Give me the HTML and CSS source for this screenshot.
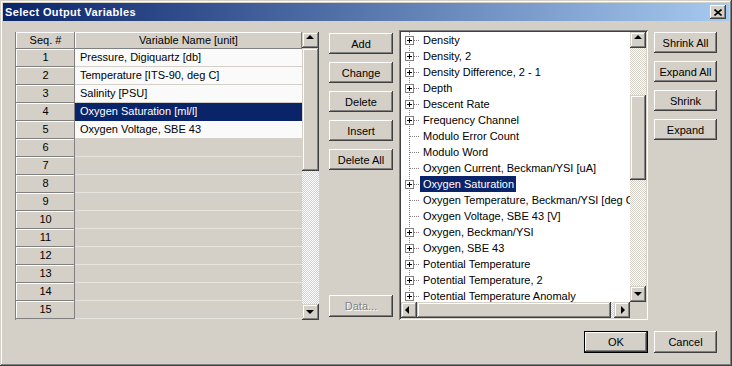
FILE: index.html
```html
<!DOCTYPE html>
<html lang="en">
<head>
	<meta charset="UTF-8">
	<title>Select Output Variables</title>
	<link rel="stylesheet" href="styles.css">
</head>
<body>
	<div class="window">
		<div class="titlebar">
			<span class="title">Select Output Variables</span>
			<button class="close" type="button">
				<svg width="8" height="7" viewBox="0 0 8 7"><path d="M0.5 0.5 L7.5 6.5 M7.5 0.5 L0.5 6.5" stroke="#000" stroke-width="1.6" fill="none"/></svg>
			</button>
		</div>
		<div class="content">
			<div class="main">
				<div class="grid">
					<div class="table">
						<div class="row head"><div class="seq">Seq. #</div><div class="name">Variable Name [unit]</div></div>
						<div class="row"><div class="seq">1</div><div class="name">Pressure, Digiquartz [db]</div></div>
						<div class="row"><div class="seq">2</div><div class="name">Temperature [ITS-90, deg C]</div></div>
						<div class="row"><div class="seq">3</div><div class="name">Salinity [PSU]</div></div>
						<div class="row sel"><div class="seq">4</div><div class="name">Oxygen Saturation [ml/l]</div></div>
						<div class="row"><div class="seq">5</div><div class="name">Oxygen Voltage, SBE 43</div></div>
						<div class="row empty"><div class="seq">6</div><div class="name"></div></div>
						<div class="row empty"><div class="seq">7</div><div class="name"></div></div>
						<div class="row empty"><div class="seq">8</div><div class="name"></div></div>
						<div class="row empty"><div class="seq">9</div><div class="name"></div></div>
						<div class="row empty"><div class="seq">10</div><div class="name"></div></div>
						<div class="row empty"><div class="seq">11</div><div class="name"></div></div>
						<div class="row empty"><div class="seq">12</div><div class="name"></div></div>
						<div class="row empty"><div class="seq">13</div><div class="name"></div></div>
						<div class="row empty"><div class="seq">14</div><div class="name"></div></div>
						<div class="row empty"><div class="seq">15</div><div class="name"></div></div>
					</div>
					<div class="vscroll grid-scroll">
						<span class="arrow up"></span>
						<span class="thumb"></span>
						<span class="track"></span>
						<span class="arrow down"></span>
					</div>
				</div>
				<div class="midcol">
					<button class="btn" type="button">Add</button>
					<button class="btn" type="button">Change</button>
					<button class="btn" type="button">Delete</button>
					<button class="btn" type="button">Insert</button>
					<button class="btn" type="button">Delete All</button>
					<button class="btn data" type="button" disabled>Data...</button>
				</div>
				<div class="tree">
					<ul class="tree-list">
						<li><span class="twig"><i class="plus"></i></span><span class="label">Density</span></li>
						<li><span class="twig"><i class="plus"></i></span><span class="label">Density, 2</span></li>
						<li><span class="twig"><i class="plus"></i></span><span class="label">Density Difference, 2 - 1</span></li>
						<li><span class="twig"><i class="plus"></i></span><span class="label">Depth</span></li>
						<li><span class="twig"><i class="plus"></i></span><span class="label">Descent Rate</span></li>
						<li><span class="twig"><i class="plus"></i></span><span class="label">Frequency Channel</span></li>
						<li><span class="twig"></span><span class="label">Modulo Error Count</span></li>
						<li><span class="twig"></span><span class="label">Modulo Word</span></li>
						<li><span class="twig"></span><span class="label">Oxygen Current, Beckman/YSI [uA]</span></li>
						<li class="sel"><span class="twig"><i class="plus"></i></span><span class="label">Oxygen Saturation</span></li>
						<li><span class="twig"></span><span class="label">Oxygen Temperature, Beckman/YSI [deg C]</span></li>
						<li><span class="twig"></span><span class="label">Oxygen Voltage, SBE 43 [V]</span></li>
						<li><span class="twig"><i class="plus"></i></span><span class="label">Oxygen, Beckman/YSI</span></li>
						<li><span class="twig"><i class="plus"></i></span><span class="label">Oxygen, SBE 43</span></li>
						<li><span class="twig"><i class="plus"></i></span><span class="label">Potential Temperature</span></li>
						<li><span class="twig"><i class="plus"></i></span><span class="label">Potential Temperature, 2</span></li>
						<li><span class="twig"><i class="plus"></i></span><span class="label">Potential Temperature Anomaly</span></li>
					</ul>
					<div class="vscroll tree-v">
						<span class="arrow up"></span>
						<span class="track top"></span>
						<span class="thumb"></span>
						<span class="track"></span>
						<span class="arrow down"></span>
					</div>
					<div class="hscroll">
						<span class="arrow left"></span>
						<span class="thumb"></span>
						<span class="track"></span>
						<span class="arrow right"></span>
					</div>
					<div class="corner"></div>
				</div>
				<div class="rightcol">
					<button class="btn" type="button">Shrink All</button>
					<button class="btn" type="button">Expand All</button>
					<button class="btn" type="button">Shrink</button>
					<button class="btn" type="button">Expand</button>
				</div>
			</div>
			<div class="footer">
				<button class="btn ok" type="button">OK</button>
				<button class="btn cancel" type="button">Cancel</button>
			</div>
		</div>
	</div>
</body>
</html>
```

FILE: styles.css
```css
*{ box-sizing: border-box; }
body{
	margin: 0;
	font: 11px "Liberation Sans", Arial, sans-serif;
	color: #000;
	background: #d4d0c8;
}
ul{ margin: 0; padding: 0; list-style: none; }

/* window frame */
.window{
	width: 732px; height: 366px;
	padding: 3px;
	background: #d4d0c8;
	box-shadow: inset -1px -1px #404040, inset 1px 1px #d4d0c8, inset -2px -2px #808080, inset 2px 2px #fff;
	display: flex; flex-direction: column;
}
.titlebar{
	height: 18px;
	padding: 0 3px 0 2px;
	background: linear-gradient(to right, #0a246a, #a6caf0);
	display: flex; align-items: center; justify-content: space-between;
}
.title{ color: #fff; font-weight: bold; font-size: 11px; letter-spacing: .35px; }
.close{
	width: 16px; height: 14px;
	padding: 0; border: 0;
	background: #d4d0c8;
	box-shadow: inset -1px -1px #404040, inset 1px 1px #fff, inset -2px -2px #808080;
	display: flex; align-items: center; justify-content: center;
}
.content{ padding: 11px 12px 0 12px; }
.main{ display: flex; align-items: flex-start; }

/* raised buttons */
.btn{
	height: 21px;
	padding: 0; border: 0;
	font: inherit; color: #000;
	background: #d4d0c8;
	box-shadow: inset -1px -1px #404040, inset 1px 1px #fff, inset -2px -2px #808080, inset 2px 2px #d4d0c8;
}
.btn:disabled{ color: #808080; text-shadow: 1px 1px #fff; }

/* grid */
.grid{ display: flex; height: 288px; }
.table{ width: 287px; border-left: 1px solid #808080; }
.row{ display: flex; height: 18px; line-height: 17px; }
.row.head{ height: 17px; line-height: 16px; }
.seq{
	width: 59px;
	text-align: center;
	background: #d4d0c8;
	box-shadow: inset -1px -1px #808080, inset 1px 1px #fff;
}
.name{
	flex: 1;
	padding-left: 5px;
	background: #fafafa;
	border-bottom: 1px solid #d4d0c8;
	white-space: nowrap; overflow: hidden;
}
.row.head .name{
	padding: 0; border: 0;
	text-align: center;
	background: #d4d0c8;
	box-shadow: inset -1px -1px #808080, inset 1px 1px #fff;
}
.row.sel .name{ background: #0a246a; color: #fff; border-bottom-color: #0a246a; }
.row.empty .name{ background: #d4d0c8; border-bottom-color: #e6e4df; }

/* scrollbars */
.vscroll{ width: 17px; display: flex; flex-direction: column; }
.hscroll{ height: 16px; display: flex; }
.arrow, .thumb{
	position: relative;
	flex: none;
	background: #d4d0c8;
	box-shadow: inset -1px -1px #404040, inset 1px 1px #d4d0c8, inset -2px -2px #808080, inset 2px 2px #fff;
}
.vscroll .arrow{ height: 16px; }
.hscroll .arrow{ width: 16px; }
.track{
	flex: 1;
	background: repeating-conic-gradient(#fff 0 25%, #d4d0c8 0 50%) 0 0 / 2px 2px;
}
.arrow::before{
	content: "";
	position: absolute;
	border: 4px solid transparent;
}
.arrow.up::before{ left: 4px; top: 3px; border-bottom-color: #000; border-top-width: 0; }
.arrow.down::before{ left: 4px; top: 6px; border-top-color: #000; border-bottom-width: 0; }
.arrow.left::before{ left: 4px; top: 4px; border-right-color: #000; border-left-width: 0; }
.arrow.right::before{ left: 7px; top: 4px; border-left-color: #000; border-right-width: 0; }
.grid-scroll .thumb{ height: 123px; }
.tree-v{ width: 16px; }
.tree-v .track.top{ flex: none; height: 47px; }
.tree-v .thumb{ height: 85px; }
.hscroll .thumb{ width: 194px; }

/* middle column */
.midcol{
	width: 64px; height: 288px;
	margin-left: 10px; padding: 1px 0 3px;
	display: flex; flex-direction: column; gap: 8px;
}
.midcol .data{ margin-top: auto; height: 22px; }

/* tree */
.tree{
	width: 249px; height: 290px;
	margin: -2px 0 0 6px;
	padding: 2px;
	background: #fff;
	box-shadow: inset 1px 1px #808080, inset -1px -1px #fff, inset 2px 2px #404040, inset -2px -2px #d4d0c8;
	display: grid;
	grid-template-columns: 229px 16px;
	grid-template-rows: 270px 16px;
}
.tree-list{
	overflow: hidden;
	background: repeating-linear-gradient(#808080 0 1px, transparent 1px 2px) 8px 0 / 1px 100% no-repeat;
}
.tree-list li{ display: flex; height: 16px; line-height: 16px; white-space: nowrap; }
.twig{ position: relative; flex: none; width: 19px; }
.twig::before{
	content: "";
	position: absolute; left: 9px; top: 8px;
	width: 10px; height: 1px;
	background: repeating-linear-gradient(to right, #808080 0 1px, transparent 1px 2px);
}
.plus{
	position: absolute; left: 4px; top: 4px;
	width: 9px; height: 9px;
	border: 1px solid #808080;
	background: #fff;
}
.plus::before, .plus::after{ content: ""; position: absolute; background: #000; }
.plus::before{ left: 1px; top: 3px; width: 5px; height: 1px; }
.plus::after{ left: 3px; top: 1px; width: 1px; height: 5px; }
.label{ padding: 0 2px 0 3px; }
.tree-list li.sel .label{ background: #0a246a; color: #fff; }
.corner{ background: #d4d0c8; }

/* right column */
.rightcol{
	width: 63px;
	margin-left: 6px;
	display: flex; flex-direction: column; gap: 8px;
}

/* footer */
.footer{ display: flex; justify-content: flex-end; gap: 6px; margin-top: 11px; }
.footer .btn{ height: 22px; width: 63px; }
.footer .ok{
	width: 64px;
	box-shadow: inset 0 0 0 1px #000, inset -2px -2px #404040, inset 2px 2px #fff, inset -3px -3px #808080;
}
```
